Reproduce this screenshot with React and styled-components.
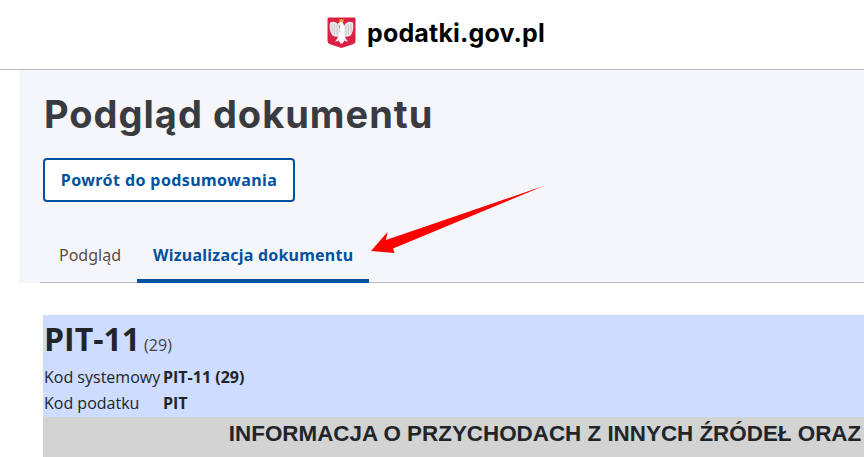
import styled, { createGlobalStyle } from "styled-components";

const GlobalStyle = createGlobalStyle`
  html, body {
    margin: 0;
    padding: 0;
    height: 100%;
    overflow: hidden;
    background: #fff;
    font-family: "Open Sans", sans-serif;
  }
`;

const Emblem = () => (
  <svg width="29" height="31" viewBox="0 0 29 31">
    <path d="M0.500 1.500Q.5 .5 1.500 .5H27.500Q28.500 .5 28.500 1.500V24Q28.500 26.500 26 27.200L14.500 31L3 27.200Q.5 26.500 .5 24Z" fill="#dc1f45" />
    <path d="M12 9C10 5 6.500 4 3 5.500C2.300 9 2.600 14 4.500 17C5 18.500 6.500 19.500 8 19.500C9.500 20 11 20 12.500 19Z" fill="#e9e9e9" />
    <path d="M17 9C19 5 22.500 4 26 5.500C26.700 9 26.400 14 24.500 17C24 18.500 22.500 19.500 21 19.500C19.500 20 18 20 16.500 19Z" fill="#e9e9e9" />
    <path d="M11.500 8.500L11 6.500L13 5H15.500L16.500 7L17.500 11L17 18L18.500 21L21 25L17.500 23.500L15.500 26.500H13.500L11.500 23.500L8 25L10.500 21L12 18L12.500 11L13 8.500Z" fill="#fff" />
    <g stroke="#bdbdbd" strokeWidth="0.8" fill="none">
      <path d="M5 7V16M7.500 7V18M10 8V18M19 8V18M21.500 7V18M24 7V16" />
    </g>
    <path d="M12.500 1.800L13.500 3L14.500 1.500L15.500 3L16.500 1.800V5H12.500Z" fill="#ecb23c" />
    <path d="M11.200 6.500L9.800 7.500L11.500 7.800Z" fill="#ecb23c" />
  </svg>
);

const Arrow = () => (
  <ArrowSvg width="190" height="80" viewBox="0 0 190 80">
    <path d="M176 .5L24 63.500L25.600 68L2 66L18.500 47L17 55Z" fill="#fe0000" />
  </ArrowSvg>
);

const App = () => {
  return (
    <Page>
      <GlobalStyle />
      <Header>
        <Logo>
          <Emblem />
          <LogoText>podatki.gov.pl</LogoText>
        </Logo>
      </Header>
      <Panel>
        <Title>Podgląd dokumentu</Title>
        <BackButton>Powrót do podsumowania</BackButton>
        <Tabs>
          <Tab>Podgląd</Tab>
          <Tab $active>Wizualizacja dokumentu</Tab>
        </Tabs>
        <Arrow />
      </Panel>
      <Document>
        <DocHead>
          <DocTitle>
            PIT-11<Version>(29)</Version>
          </DocTitle>
          <MetaRow>
            <MetaLabel>Kod systemowy</MetaLabel>
            <MetaValue>PIT-11 (29)</MetaValue>
          </MetaRow>
          <MetaRow>
            <MetaLabel>Kod podatku</MetaLabel>
            <MetaValue>PIT</MetaValue>
          </MetaRow>
        </DocHead>
        <FormTitle>INFORMACJA O PRZYCHODACH Z INNYCH ŹRÓDEŁ ORAZ</FormTitle>
      </Document>
    </Page>
  );
};

const Page = styled.div`
  width: 864px;
  height: 457px;
  overflow: hidden;
  color: #333;
`;

const Header = styled.header`
  height: 69px;
  display: flex;
  justify-content: center;
  align-items: center;
  border-bottom: 1px solid #bbb;
  background: #fff;
`;

const Logo = styled.div`
  display: flex;
  align-items: center;
  gap: 11px;
  margin-left: 8px;
  margin-top: -4px;
`;

const LogoText = styled.span`
  font-family: "Inter", sans-serif;
  font-size: 25px;
  font-weight: 700;
  letter-spacing: 0.15px;
  color: #000;
`;

const Panel = styled.section`
  position: relative;
  margin-left: 19px;
  height: 213px;
  padding: 0 0 0 24px;
  background: #f5f6fa;
  display: flex;
  flex-direction: column;
  align-items: flex-start;
`;

const Title = styled.h1`
  margin: 21px 0 0 1px;
  font-family: "Inter", sans-serif;
  font-size: 38px;
  line-height: 46px;
  font-weight: 700;
  letter-spacing: 1px;
  color: #3a3b40;
`;

const BackButton = styled.button`
  box-sizing: border-box;
  width: 252px;
  height: 44px;
  margin-top: 21px;
  padding: 0;
  background: #fff;
  border: 2px solid #00519f;
  border-radius: 4px;
  color: #00519f;
  font-family: "Noto Sans", sans-serif;
  font-size: 16px;
  font-weight: 700;
  letter-spacing: 0.4px;
`;

const Tabs = styled.div`
  align-self: stretch;
  margin-top: 34px;
  display: flex;
  border-bottom: 1px solid #bbb;
  margin-left: -3px;
  padding-left: 3px;
`;

const Tab = styled.div`
  box-sizing: border-box;
  height: 47px;
  margin-bottom: -1px;
  padding: 8px 16px 0;
  font-family: "Noto Sans", sans-serif;
  font-size: 16px;
  line-height: 22px;
  font-weight: ${(props) => (props.$active ? 700 : 400)};
  letter-spacing: ${(props) => (props.$active ? "0.23px" : "0")};
  color: ${(props) => (props.$active ? "#00519f" : "#5c4a3c")};
  border-bottom: 4px solid ${(props) => (props.$active ? "#00519f" : "transparent")};
`;

const ArrowSvg = styled.svg`
  position: absolute;
  left: 350px;
  top: 115px;
`;

const Document = styled.div`
  width: 1004px;
  margin: 32px 0 0 43px;
`;

const DocHead = styled.div`
  box-sizing: border-box;
  height: 102px;
  padding: 5px 1px 0;
  background: #cddcff;
  color: #212529;
`;

const DocTitle = styled.h2`
  margin: 0;
  font-size: 32px;
  line-height: 38px;
  font-weight: 700;
`;

const Version = styled.span`
  margin-left: 4px;
  font-size: 16px;
  font-weight: 400;
  color: #444;
`;

const MetaRow = styled.div`
  display: flex;
  font-size: 16px;
  line-height: 26px;
  height: 26px;
`;

const MetaLabel = styled.span`
  width: 119px;
  white-space: nowrap;
`;

const MetaValue = styled.span`
  font-weight: 700;
`;

const FormTitle = styled.div`
  height: 40px;
  padding-top: 3px;
  box-sizing: border-box;
  background: #d3d3d3;
  text-align: center;
  font-family: "Liberation Sans", sans-serif;
  font-size: 22.4px;
  line-height: 28px;
  font-weight: 700;
  color: #212529;
`;

export default App;
